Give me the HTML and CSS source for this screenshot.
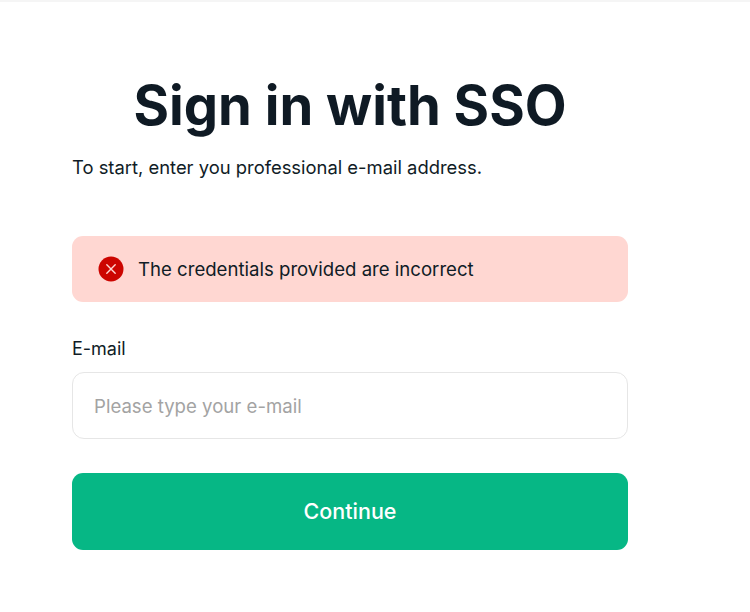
FILE: index.html
```html
<!DOCTYPE html>
<html>
  <head>
    <meta name="viewport" content="width=device-width, initial-scale=1">
    <link rel="stylesheet" href="styles.css">
  </head>

  <body>
    <div class="topline"></div>

    <form class="signin">
      <h1 class="title">Sign in with SSO</h1>
      <p class="intro">To start, enter you professional e-mail address.</p>

      <div class="alert">
        <svg class="alert-icon" width="26" height="26" viewBox="0 0 26 26">
          <circle cx="13" cy="13" r="12.5" fill="#cc0500"/>
          <path d="M8.8 8.8 L17.2 17.2 M17.2 8.8 L8.8 17.2" stroke="#ffd7d2" stroke-width="1.4" stroke-linecap="round"/>
        </svg>
        <span>The credentials provided are incorrect</span>
      </div>

      <label class="label" for="email">E-mail</label>
      <input class="input" id="email" type="text" placeholder="Please type your e-mail">

      <button class="button" type="button">Continue</button>
    </form>
  </body>
</html>
```

FILE: styles.css
```css
html, body {
  margin: 0;
  padding: 0;
  background: #ffffff;
}

body {
  font-family: "Inter", "Liberation Sans", sans-serif;
  color: #101c26;
}

.topline {
  height: 2px;
  background: #f5f5f5;
}

.signin {
  display: flex;
  flex-direction: column;
  width: 556px;
  margin-left: 72px;
}

.title {
  margin: 67px 0 0;
  font-size: 54.3px;
  line-height: 72px;
  font-weight: 700;
  text-align: center;
  color: #0f1a24;
}

.intro {
  margin: 14px 0 0;
  font-size: 18.4px;
  line-height: 24px;
}

.alert {
  display: flex;
  align-items: center;
  gap: 14px;
  height: 66px;
  margin-top: 57px;
  padding-left: 26px;
  border-radius: 11px;
  background: #ffd7d2;
  font-size: 18.6px;
}

.alert-icon {
  flex: none;
}

.label {
  margin-top: 35px;
  font-size: 18px;
  line-height: 24px;
}

.input {
  box-sizing: border-box;
  height: 67px;
  margin-top: 11px;
  padding: 1px 21px 0;
  border: 1px solid #e6e6e6;
  border-radius: 12px;
  font-family: inherit;
  font-size: 18.6px;
  outline: none;
}

.input::placeholder {
  color: #a3a3a3;
  opacity: 1;
}

.button {
  height: 77px;
  margin-top: 34px;
  padding: 0 0 2px;
  border: none;
  border-radius: 11px;
  background: #06b785;
  color: #ffffff;
  font-family: inherit;
  font-size: 21.5px;
  font-weight: 500;
  cursor: pointer;
}
```
